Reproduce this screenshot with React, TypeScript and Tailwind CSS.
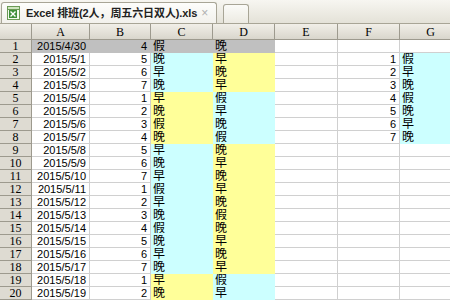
const COLS = [
  { key: "A", w: 58 },
  { key: "B", w: 61 },
  { key: "C", w: 62 },
  { key: "D", w: 62 },
  { key: "E", w: 63 },
  { key: "F", w: 62 },
  { key: "G", w: 62 },
];

const C_VALS = "假晚早晚早晚假晚早晚早假早晚假晚早晚早晚";
const D_VALS = "晚早晚早假早晚假晚早晚早晚假晚早晚早假早";
const B_VALS = [4, 5, 6, 7, 1, 2, 3, 4, 5, 6, 7, 1, 2, 3, 4, 5, 6, 7, 1, 2];
const DATES = [
  "2015/4/30", "2015/5/1", "2015/5/2", "2015/5/3", "2015/5/4",
  "2015/5/5", "2015/5/6", "2015/5/7", "2015/5/8", "2015/5/9",
  "2015/5/10", "2015/5/11", "2015/5/12", "2015/5/13", "2015/5/14",
  "2015/5/15", "2015/5/16", "2015/5/17", "2015/5/18", "2015/5/19",
];
const G_VALS = "假早晚假晚早晚";

type Fill = "none" | "cyan" | "yellow" | "gray";

function fillFor(row: number, col: string): Fill {
  if (row === 1) return col === "A" || col === "B" || col === "C" || col === "D" ? "gray" : "none";
  if (col === "G") return row >= 2 && row <= 8 ? "cyan" : "none";
  const swap = (row >= 5 && row <= 8) || row >= 19;
  if (col === "C") return swap ? "yellow" : "cyan";
  if (col === "D") return swap ? "cyan" : "yellow";
  return "none";
}

const fillCls: Record<Fill, string> = {
  none: "bg-white border-[#d0d0d0]",
  cyan: "bg-[#ccffff] border-[#ccffff]",
  yellow: "bg-[#ffff99] border-[#ffff99]",
  gray: "bg-[#c0c0c0] border-[#c0c0c0]",
};

function ExcelIcon() {
  return (
    <svg width="16" height="16" viewBox="0 0 16 16" className="shrink-0">
      <rect x="1.5" y="1.5" width="12" height="13" fill="#f4fbef" stroke="#6b9a55" />
      <rect x="1.5" y="1.5" width="12" height="3" fill="#cfe6bf" stroke="#6b9a55" />
      <rect x="3" y="5" width="8" height="8" fill="#3f8f3a" />
      <path d="M4.5 6.5 L9.5 11.5 M9.5 6.5 L4.5 11.5" stroke="#fff" strokeWidth="1.4" />
    </svg>
  );
}

function cellText(row: number, col: string) {
  const i = row - 1;
  if (col === "A") return DATES[i];
  if (col === "B") return String(B_VALS[i]);
  if (col === "C") return C_VALS[i];
  if (col === "D") return D_VALS[i];
  if (col === "F" && row >= 2 && row <= 8) return String(row - 1);
  if (col === "G" && row >= 2 && row <= 8) return G_VALS[row - 2];
  return "";
}

export default function App() {
  const rows = Array.from({ length: 20 }, (_, i) => i + 1);
  return (
    <div className="h-[300px] w-[450px] overflow-hidden bg-white font-['Liberation_Sans','Noto_Sans_CJK_SC',sans-serif] text-[12px] text-black">
      {/* tab bar */}
      <div className="flex h-[24px] items-end gap-[6px] border-b border-[#a8a596] bg-gradient-to-b from-[#f7f6f1] to-[#e4e2d8] pl-[1px]">
        <div className="flex h-[21px] w-[216px] items-center gap-[4px] rounded-t-[3px] border border-b-0 border-[#a8a596] bg-gradient-to-b from-[#fdfdfb] to-[#f2f1ec] pl-[4px] pr-[8px]">
          <ExcelIcon />
          <span className="whitespace-nowrap text-[11px] font-semibold leading-none tracking-[-0.1px] text-[#222]">
            Excel 排班(2人，周五六日双人).xls
          </span>
          <span className="ml-auto text-[12px] leading-none text-[#b0b0b0]">×</span>
        </div>
        <div className="h-[19px] w-[26px] rounded-t-[3px] border border-b-0 border-[#a8a596] bg-gradient-to-b from-[#fbfbf8] to-[#eceae2]" />
      </div>

      {/* column headers */}
      <div className="flex h-[16px]">
        <div className="w-[32px] shrink-0 border-b border-r border-[#9d9a8e] bg-gradient-to-b from-[#f1efe8] to-[#d9d6cc]" />
        {COLS.map((c) => (
          <div
            key={c.key}
            style={{ width: c.w }}
            className="flex shrink-0 items-center justify-center border-b border-r border-[#9d9a8e] bg-gradient-to-b from-[#f1efe8] to-[#d9d6cc] font-['Liberation_Serif',serif] text-[12px] leading-none"
          >
            {c.key}
          </div>
        ))}
      </div>

      {/* rows */}
      {rows.map((r) => (
        <div key={r} className="flex h-[13px]">
          <div className="flex w-[32px] shrink-0 items-center justify-center border-b border-r border-[#9d9a8e] bg-[#dedbd2] font-['Liberation_Serif',serif] text-[12px] leading-[12px]">
            {r}
          </div>
          {COLS.map((c) => {
            const f = fillFor(r, c.key);
            const txt = cellText(r, c.key);
            const left = c.key === "C" || c.key === "D" || c.key === "G";
            return (
              <div
                key={c.key}
                style={{ width: c.w }}
                className={`flex shrink-0 items-center overflow-hidden whitespace-nowrap border-b border-r leading-[12px] ${fillCls[f]} ${
                  left ? "justify-start pl-[2px] text-[12px]" : "justify-end pr-[3px] text-[11px]"
                }`}
              >
                {txt}
              </div>
            );
          })}
        </div>
      ))}
    </div>
  );
}
